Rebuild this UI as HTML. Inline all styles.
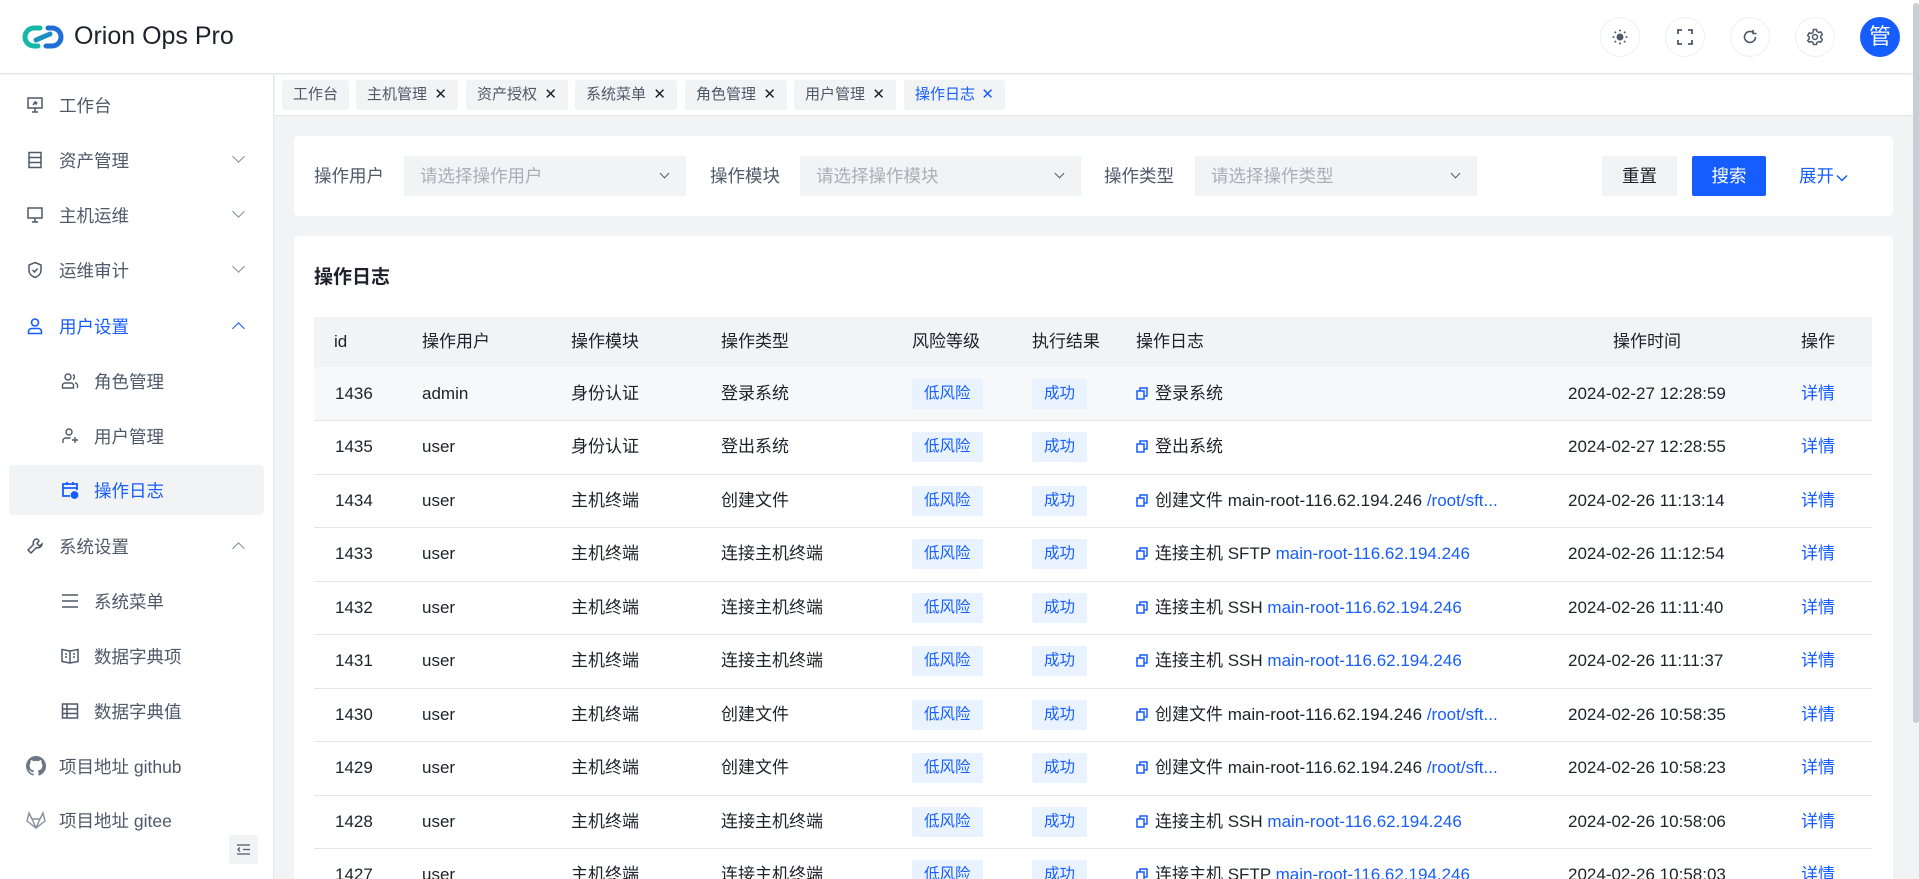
<!DOCTYPE html>
<html style="width:1919px;height:879px;overflow:hidden"><head><meta charset="utf-8">
<style>
*{box-sizing:border-box;margin:0;padding:0}
body{width:1919px;height:879px;overflow:hidden;background:#f2f3f5;font-family:"Liberation Sans","Noto Sans CJK SC",sans-serif;color:#1d2129;position:relative}
.hdr{position:absolute;left:0;top:0;width:1919px;height:74px;background:#fff;border-bottom:1px solid #e5e6eb}
.logo{position:absolute;left:22px;top:22px}
.title{position:absolute;left:74px;top:22px;font-size:25px;color:#1d2129}
.ib{position:absolute;top:17px;width:40px;height:40px;border-radius:50%;border:1px solid #eef0f3;background:#fff;display:flex;align-items:center;justify-content:center}
.av{position:absolute;left:1860px;top:17px;width:40px;height:40px;border-radius:50%;background:#165dff;color:#fff;font-size:22px;text-align:center;line-height:40px}
.side{position:absolute;left:0;top:75px;width:274px;height:804px;background:#fff;border-right:1px solid #e5e6eb}
.mi{position:absolute;left:0;width:274px;height:50px;font-size:17.5px;color:#4e5969;display:flex;align-items:center}
.mi svg{position:absolute;left:26px}
.mi .t{position:absolute;left:59px}
.sub svg{left:61px}.sub .t{left:94px}
.arr{position:absolute;left:234px;width:9px;height:9px;border-right:1.5px solid #86909c;border-bottom:1.5px solid #86909c}
.down{transform:rotate(45deg);top:17px}.up{transform:rotate(-135deg);top:23px}
.act{background:#f2f3f5;left:9px;width:255px;border-radius:4px;color:#165dff}
.act svg{left:52px}.act .t{left:85px}
.tabs{position:absolute;left:275px;top:75px;width:1638px;height:41px;background:#fff;border-bottom:1px solid #e5e6eb}
.tab{position:absolute;top:5px;height:30px;background:#f2f3f5;border-radius:3px;font-size:15px;color:#4e5969;line-height:30px;padding-left:11px}
.tab .x{position:absolute;right:11px;font-size:15px;color:#1d2129}
.card{position:absolute;left:294px;width:1599px;background:#fff;border-radius:4px;overflow:hidden}
.lbl{position:absolute;top:30px;font-size:17.5px;color:#4e5969;line-height:20px}
.sel{position:absolute;top:20px;height:40px;background:#f2f3f5;font-size:17.5px;color:#a9aeb8;line-height:40px;padding-left:16px}
.sel i{position:absolute;right:18px;top:14px;width:7px;height:7px;border-right:1.5px solid #4e5969;border-bottom:1.5px solid #4e5969;transform:rotate(45deg)}
.btn{position:absolute;top:20px;height:40px;line-height:40px;text-align:center;font-size:17.5px}
table{position:absolute;left:20px;top:81px;width:1558px;border-collapse:collapse;font-size:17px;table-layout:fixed}
th{height:50px;background:#f2f3f5;font-weight:normal;text-align:left;color:#1d2129;padding:0;vertical-align:middle;line-height:20px}
td{height:53.5px;border-bottom:1px solid #e5e6eb;padding:0;color:#1d2129;white-space:nowrap;vertical-align:middle;line-height:20px;overflow:hidden}
tr.f td{background:#f7f8fa}
.tg{display:inline-block;height:30px;line-height:30px;background:#e8f3ff;color:#165dff;padding:0 12px;font-size:15.5px;border-radius:2px;vertical-align:middle}
.b{color:#165dff}
.ci{display:inline-block;width:12px;height:13px;margin-right:7px;vertical-align:-1px}
.sb{position:absolute;left:1913px;top:3px;width:6px;height:720px;background:#c9cdd4;border-radius:3px}
</style></head><body>
<div class="hdr">
<svg class="logo" width="42" height="30" viewBox="0 0 42 30"><path d="M18 6 H12 a9 9 0 0 0 0 18 h4" fill="none" stroke="#14b8a6" stroke-width="5" stroke-linecap="round"/><path d="M24 24 H30 a9 9 0 0 0 0 -18 h-4" fill="none" stroke="#1f6fd6" stroke-width="5" stroke-linecap="round"/><path d="M14 18 L28 12" stroke="#1a8fc0" stroke-width="5" stroke-linecap="round"/></svg>
<div class="title">Orion Ops Pro</div>
<div class="ib" style="left:1600px"><svg width="16" height="16" viewBox="0 0 16 16" fill="#4e5969"><circle cx="8" cy="8" r="3.5"/><circle cx="8" cy="1.5" r="1"/><circle cx="8" cy="14.5" r="1"/><circle cx="1.5" cy="8" r="1"/><circle cx="14.5" cy="8" r="1"/><circle cx="3.4" cy="3.4" r="1"/><circle cx="12.6" cy="12.6" r="1"/><circle cx="3.4" cy="12.6" r="1"/><circle cx="12.6" cy="3.4" r="1"/></svg></div>
<div class="ib" style="left:1665px"><svg width="16" height="16" viewBox="0 0 16 16" fill="none" stroke="#4e5969" stroke-width="1.8"><path d="M1 5V1h4M11 1h4v4M15 11v4h-4M5 15H1v-4"/></svg></div>
<div class="ib" style="left:1730px"><svg width="16" height="16" viewBox="0 0 16 16" fill="none" stroke="#4e5969" stroke-width="1.6"><path d="M13.5 8A5.5 5.5 0 1 1 11.5 3.7"/><path d="M11 1v3.5h3.5"/></svg></div>
<div class="ib" style="left:1795px"><svg width="18" height="18" viewBox="0 0 18 18" fill="none" stroke="#4e5969" stroke-width="1.5"><path d="M7.5 1.5h3l.5 2 1.8 1 2-.6 1.5 2.6-1.5 1.5v2l1.5 1.5-1.5 2.6-2-.6-1.8 1-.5 2h-3l-.5-2-1.8-1-2 .6L1.7 12.5l1.5-1.5V9L1.7 7.5 3.2 4.9l2 .6 1.8-1z"/><circle cx="9" cy="9" r="2.5"/></svg></div>
<div class="av">管</div>
</div>

<div class="side">
<div class="mi" style="top:5px"><svg width="18" height="18" viewBox="0 0 18 18" fill="none" stroke="#4e5969" stroke-width="1.5"><rect x="2" y="2" width="14" height="10"/><path d="M9 12v4M6 16h6M7 9l2-3 1 2 1-2"/></svg><span class="t">工作台</span></div>
<div class="mi" style="top:60px"><svg width="18" height="18" viewBox="0 0 18 18" fill="none" stroke="#4e5969" stroke-width="1.5"><rect x="3" y="1.5" width="12" height="15"/><path d="M3 6.5h12M3 11.5h12"/></svg><span class="t">资产管理</span><i class="arr down"></i></div>
<div class="mi" style="top:115px"><svg width="18" height="18" viewBox="0 0 18 18" fill="none" stroke="#4e5969" stroke-width="1.5"><rect x="2" y="2" width="14" height="10"/><path d="M9 12v4M6 16h6"/></svg><span class="t">主机运维</span><i class="arr down"></i></div>
<div class="mi" style="top:170px"><svg width="18" height="18" viewBox="0 0 18 18" fill="none" stroke="#4e5969" stroke-width="1.5"><path d="M9 1.5l6 2.5v5c0 4-3 6.5-6 7.5-3-1-6-3.5-6-7.5V4z"/><path d="M6.5 9l2 2 3-3.5"/></svg><span class="t">运维审计</span><i class="arr down"></i></div>
<div class="mi" style="top:226px;color:#165dff"><svg width="18" height="18" viewBox="0 0 18 18" fill="none" stroke="#165dff" stroke-width="1.6"><circle cx="9" cy="5.5" r="3.5"/><path d="M2.5 16.5v-2a3 3 0 0 1 3-3h7a3 3 0 0 1 3 3v2z"/></svg><span class="t">用户设置</span><i class="arr up" style="border-color:#165dff"></i></div>
<div class="mi sub" style="top:281px"><svg width="18" height="18" viewBox="0 0 18 18" fill="none" stroke="#4e5969" stroke-width="1.4"><circle cx="7" cy="5" r="3"/><path d="M1.5 16v-2.5a2.5 2.5 0 0 1 2.5-2.5h6a2.5 2.5 0 0 1 2.5 2.5V16zM12 2.5a3 3 0 0 1 0 5M14 11a2.5 2.5 0 0 1 2.5 2.5V16"/></svg><span class="t">角色管理</span></div>
<div class="mi sub" style="top:336px"><svg width="18" height="18" viewBox="0 0 18 18" fill="none" stroke="#4e5969" stroke-width="1.4"><circle cx="8" cy="5" r="3"/><path d="M2 16v-2.5A2.5 2.5 0 0 1 4.5 11h5M14 10v6M11 13h6"/></svg><span class="t">用户管理</span></div>
<div class="mi act" style="top:390px"><svg width="18" height="18" viewBox="0 0 18 18" fill="none" stroke="#165dff" stroke-width="1.8"><path d="M9 15H2V3h14v6M2 7h14M6 1v3M12 1v3"/><circle cx="13.5" cy="14" r="3" fill="#165dff"/></svg><span class="t">操作日志</span></div>
<div class="mi" style="top:446px"><svg width="18" height="18" viewBox="0 0 18 18" fill="none" stroke="#4e5969" stroke-width="1.5"><path d="M11 2a4 4 0 0 0-3.5 5.5L2 13l3 3 5.5-5.5A4 4 0 0 0 16 7l-2.5 2-2.5-2.5 2-2.5A4 4 0 0 0 11 2z"/></svg><span class="t">系统设置</span><i class="arr up"></i></div>
<div class="mi sub" style="top:501px"><svg width="18" height="18" viewBox="0 0 18 18" fill="none" stroke="#4e5969" stroke-width="1.5"><path d="M1 3h16M1 9h16M1 15h16"/></svg><span class="t">系统菜单</span></div>
<div class="mi sub" style="top:556px"><svg width="18" height="18" viewBox="0 0 18 18" fill="none" stroke="#4e5969" stroke-width="1.5"><path d="M1 2.5l8 1.5 8-1.5v12l-8 1.5-8-1.5zM9 4v12M4 7h2M4 10h2M12 7h2M12 10h2"/></svg><span class="t">数据字典项</span></div>
<div class="mi sub" style="top:611px"><svg width="18" height="18" viewBox="0 0 18 18" fill="none" stroke="#4e5969" stroke-width="1.5"><rect x="1.5" y="2" width="15" height="14"/><path d="M1.5 7h15M1.5 11.5h15M6 2v14"/></svg><span class="t">数据字典值</span></div>
<div class="mi" style="top:666px"><svg width="20" height="20" viewBox="0 0 16 16" fill="#6b7785"><path d="M8 0C3.58 0 0 3.58 0 8c0 3.54 2.29 6.53 5.47 7.59.4.07.55-.17.55-.38v-1.33c-2.23.48-2.7-1.07-2.7-1.07-.36-.92-.89-1.17-.89-1.17-.73-.5.06-.49.06-.49.8.06 1.23.83 1.23.83.72 1.22 1.87.87 2.33.66.07-.52.28-.87.5-1.07-1.78-.2-3.64-.89-3.64-3.95 0-.87.31-1.59.82-2.15-.08-.2-.36-1.02.08-2.12 0 0 .67-.21 2.2.82a7.6 7.6 0 0 1 4 0c1.53-1.04 2.2-.82 2.2-.82.44 1.1.16 1.92.08 2.12.51.56.82 1.27.82 2.15 0 3.07-1.87 3.75-3.65 3.95.29.25.54.73.54 1.48v2.2c0 .21.15.46.55.38A8 8 0 0 0 16 8c0-4.42-3.58-8-8-8z"/></svg><span class="t">项目地址 github</span></div>
<div class="mi" style="top:720px"><svg width="20" height="18" viewBox="0 0 20 18" fill="none" stroke="#86909c" stroke-width="1.4"><path d="M10 17L1 10l2-8 3 6h8l3-6 2 8zM6 8l4 9 4-9"/></svg><span class="t">项目地址 gitee</span></div>
<div style="position:absolute;left:229px;top:760px;width:29px;height:29px;background:#f2f3f5;border-radius:2px"><svg style="position:absolute;left:8px;top:9px" width="13" height="11" viewBox="0 0 13 11" fill="none" stroke="#4e5969" stroke-width="1.3"><path d="M0 1h13M6 5.5h7M0 10h13M3 3.5l-2 2 2 2"/></svg></div>
</div>

<div class="tabs">
<div class="tab" style="left:7px;width:67px">工作台</div>
<div class="tab" style="left:81px;width:102px">主机管理<span class="x">✕</span></div>
<div class="tab" style="left:191px;width:102px">资产授权<span class="x">✕</span></div>
<div class="tab" style="left:300px;width:102px">系统菜单<span class="x">✕</span></div>
<div class="tab" style="left:410px;width:102px">角色管理<span class="x">✕</span></div>
<div class="tab" style="left:519px;width:102px">用户管理<span class="x">✕</span></div>
<div class="tab" style="left:629px;width:101px;color:#165dff">操作日志<span class="x" style="color:#165dff">✕</span></div>
</div>

<div class="card" style="top:136px;height:80px">
<div class="lbl" style="left:20px">操作用户</div>
<div class="sel" style="left:110px;width:282px">请选择操作用户<i></i></div>
<div class="lbl" style="left:416px">操作模块</div>
<div class="sel" style="left:506px;width:281px">请选择操作模块<i></i></div>
<div class="lbl" style="left:810px">操作类型</div>
<div class="sel" style="left:901px;width:282px">请选择操作类型<i></i></div>
<div class="btn" style="left:1308px;width:75px;background:#f2f3f5;color:#1d2129;border-radius:2px">重置</div>
<div class="btn" style="left:1398px;width:74px;background:#165dff;color:#fff;border-radius:2px">搜索</div>
<div class="btn" style="left:1505px;width:55px;color:#165dff;text-align:left">展开<svg width="12" height="8" viewBox="0 0 12 8" fill="none" stroke="#165dff" stroke-width="1.5" style="margin-left:2px"><path d="M1 1.5l5 5 5-5"/></svg></div>
</div>

<div class="card" style="top:236px;height:643px;border-radius:4px 4px 0 0">
<div style="position:absolute;left:20px;top:26px;font-size:19px;font-weight:bold">操作日志</div>
<table>
<colgroup><col style="width:108px"><col style="width:149px"><col style="width:150px"><col style="width:191px"><col style="width:120px"><col style="width:104px"><col style="width:432px"><col style="width:233px"><col style="width:71px"></colgroup>
<tr><th style="padding-left:20px">id</th><th>操作用户</th><th>操作模块</th><th>操作类型</th><th>风险等级</th><th>执行结果</th><th>操作日志</th><th style="padding-left:45px">操作时间</th><th>操作</th></tr>
<tr class="f"><td style="padding-left:21px">1436</td><td>admin</td><td>身份认证</td><td>登录系统</td><td><span class="tg">低风险</span></td><td><span class="tg">成功</span></td><td><svg class="ci" viewBox="0 0 12 13" fill="none" stroke="#165dff" stroke-width="1.5"><rect x="1" y="4" width="7" height="8"/><path d="M4 4V1h7v8H8"/></svg>登录系统</td><td>2024-02-27 12:28:59</td><td class="b">详情</td></tr>
<tr><td style="padding-left:21px">1435</td><td>user</td><td>身份认证</td><td>登出系统</td><td><span class="tg">低风险</span></td><td><span class="tg">成功</span></td><td><svg class="ci" viewBox="0 0 12 13" fill="none" stroke="#165dff" stroke-width="1.5"><rect x="1" y="4" width="7" height="8"/><path d="M4 4V1h7v8H8"/></svg>登出系统</td><td>2024-02-27 12:28:55</td><td class="b">详情</td></tr>
<tr><td style="padding-left:21px">1434</td><td>user</td><td>主机终端</td><td>创建文件</td><td><span class="tg">低风险</span></td><td><span class="tg">成功</span></td><td><svg class="ci" viewBox="0 0 12 13" fill="none" stroke="#165dff" stroke-width="1.5"><rect x="1" y="4" width="7" height="8"/><path d="M4 4V1h7v8H8"/></svg>创建文件 main-root-116.62.194.246 <span class="b">/root/sft...</span></td><td>2024-02-26 11:13:14</td><td class="b">详情</td></tr>
<tr><td style="padding-left:21px">1433</td><td>user</td><td>主机终端</td><td>连接主机终端</td><td><span class="tg">低风险</span></td><td><span class="tg">成功</span></td><td><svg class="ci" viewBox="0 0 12 13" fill="none" stroke="#165dff" stroke-width="1.5"><rect x="1" y="4" width="7" height="8"/><path d="M4 4V1h7v8H8"/></svg>连接主机 SFTP <span class="b">main-root-116.62.194.246</span></td><td>2024-02-26 11:12:54</td><td class="b">详情</td></tr>
<tr><td style="padding-left:21px">1432</td><td>user</td><td>主机终端</td><td>连接主机终端</td><td><span class="tg">低风险</span></td><td><span class="tg">成功</span></td><td><svg class="ci" viewBox="0 0 12 13" fill="none" stroke="#165dff" stroke-width="1.5"><rect x="1" y="4" width="7" height="8"/><path d="M4 4V1h7v8H8"/></svg>连接主机 SSH <span class="b">main-root-116.62.194.246</span></td><td>2024-02-26 11:11:40</td><td class="b">详情</td></tr>
<tr><td style="padding-left:21px">1431</td><td>user</td><td>主机终端</td><td>连接主机终端</td><td><span class="tg">低风险</span></td><td><span class="tg">成功</span></td><td><svg class="ci" viewBox="0 0 12 13" fill="none" stroke="#165dff" stroke-width="1.5"><rect x="1" y="4" width="7" height="8"/><path d="M4 4V1h7v8H8"/></svg>连接主机 SSH <span class="b">main-root-116.62.194.246</span></td><td>2024-02-26 11:11:37</td><td class="b">详情</td></tr>
<tr><td style="padding-left:21px">1430</td><td>user</td><td>主机终端</td><td>创建文件</td><td><span class="tg">低风险</span></td><td><span class="tg">成功</span></td><td><svg class="ci" viewBox="0 0 12 13" fill="none" stroke="#165dff" stroke-width="1.5"><rect x="1" y="4" width="7" height="8"/><path d="M4 4V1h7v8H8"/></svg>创建文件 main-root-116.62.194.246 <span class="b">/root/sft...</span></td><td>2024-02-26 10:58:35</td><td class="b">详情</td></tr>
<tr><td style="padding-left:21px">1429</td><td>user</td><td>主机终端</td><td>创建文件</td><td><span class="tg">低风险</span></td><td><span class="tg">成功</span></td><td><svg class="ci" viewBox="0 0 12 13" fill="none" stroke="#165dff" stroke-width="1.5"><rect x="1" y="4" width="7" height="8"/><path d="M4 4V1h7v8H8"/></svg>创建文件 main-root-116.62.194.246 <span class="b">/root/sft...</span></td><td>2024-02-26 10:58:23</td><td class="b">详情</td></tr>
<tr><td style="padding-left:21px">1428</td><td>user</td><td>主机终端</td><td>连接主机终端</td><td><span class="tg">低风险</span></td><td><span class="tg">成功</span></td><td><svg class="ci" viewBox="0 0 12 13" fill="none" stroke="#165dff" stroke-width="1.5"><rect x="1" y="4" width="7" height="8"/><path d="M4 4V1h7v8H8"/></svg>连接主机 SSH <span class="b">main-root-116.62.194.246</span></td><td>2024-02-26 10:58:06</td><td class="b">详情</td></tr>
<tr><td style="padding-left:21px">1427</td><td>user</td><td>主机终端</td><td>连接主机终端</td><td><span class="tg">低风险</span></td><td><span class="tg">成功</span></td><td><svg class="ci" viewBox="0 0 12 13" fill="none" stroke="#165dff" stroke-width="1.5"><rect x="1" y="4" width="7" height="8"/><path d="M4 4V1h7v8H8"/></svg>连接主机 SFTP <span class="b">main-root-116.62.194.246</span></td><td>2024-02-26 10:58:03</td><td class="b">详情</td></tr>
</table>
</div>
<div class="sb"></div>
</body></html>
